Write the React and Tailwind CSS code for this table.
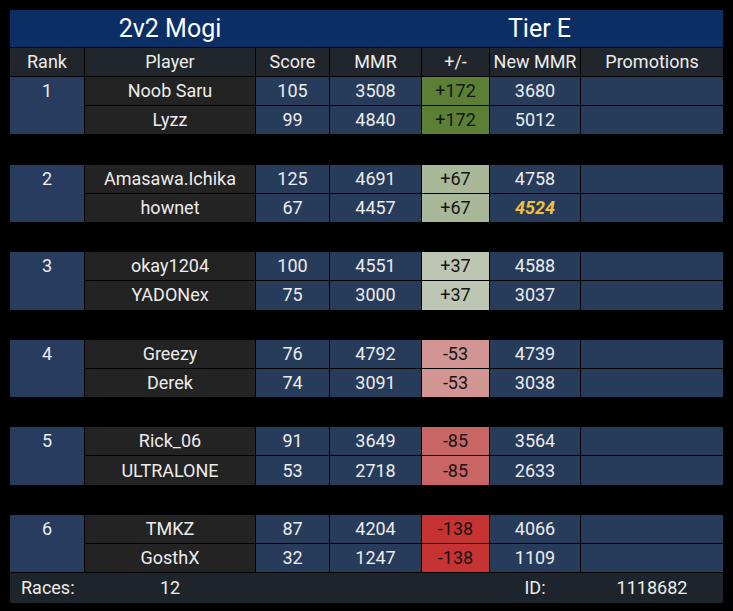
import React from "react";

const groups = [
  {
    rank: 1,
    players: [
      { name: "Noob Saru", score: 105, mmr: 3508, delta: "+172", newMmr: 3680 },
      { name: "Lyzz", score: 99, mmr: 4840, delta: "+172", newMmr: 5012 },
    ],
    deltaBg: "bg-[#5b7f35]",
  },
  {
    rank: 2,
    players: [
      { name: "Amasawa.Ichika", score: 125, mmr: 4691, delta: "+67", newMmr: 4758 },
      { name: "hownet", score: 67, mmr: 4457, delta: "+67", newMmr: 4524, highlight: true },
    ],
    deltaBg: "bg-[#a8b898]",
  },
  {
    rank: 3,
    players: [
      { name: "okay1204", score: 100, mmr: 4551, delta: "+37", newMmr: 4588 },
      { name: "YADONex", score: 75, mmr: 3000, delta: "+37", newMmr: 3037 },
    ],
    deltaBg: "bg-[#bcc6b2]",
  },
  {
    rank: 4,
    players: [
      { name: "Greezy", score: 76, mmr: 4792, delta: "-53", newMmr: 4739 },
      { name: "Derek", score: 74, mmr: 3091, delta: "-53", newMmr: 3038 },
    ],
    deltaBg: "bg-[#d39594]",
  },
  {
    rank: 5,
    players: [
      { name: "Rick_06", score: 91, mmr: 3649, delta: "-85", newMmr: 3564 },
      { name: "ULTRALONE", score: 53, mmr: 2718, delta: "-85", newMmr: 2633 },
    ],
    deltaBg: "bg-[#c96665]",
  },
  {
    rank: 6,
    players: [
      { name: "TMKZ", score: 87, mmr: 4204, delta: "-138", newMmr: 4066 },
      { name: "GosthX", score: 32, mmr: 1247, delta: "-138", newMmr: 1109 },
    ],
    deltaBg: "bg-[#c73333]",
  },
];

const cols = "grid grid-cols-[74px_170px_73px_91px_67px_90px_142px] gap-px";
const cell = "flex items-center justify-center";

const Group = ({ group }) => (
  <div className={`${cols} grid-rows-[28.2px_28.2px]`}>
    <div className="row-span-2 bg-[#273c5e] flex justify-center">
      <span className="h-[28.2px] flex items-center">{group.rank}</span>
    </div>
    {group.players.map((p, i) => (
      <React.Fragment key={i}>
        <div className={`${cell} bg-[#232323]`}>{p.name}</div>
        <div className={`${cell} bg-[#273b5b]`}>{p.score}</div>
        <div className={`${cell} bg-[#273b5b]`}>{p.mmr}</div>
        <div className={`${cell} ${group.deltaBg} text-[#151515]`}>{p.delta}</div>
        <div className={`${cell} bg-[#273b5b]`}>
          {p.highlight ? (
            <span className="font-bold italic text-[#f0c237]">{p.newMmr}</span>
          ) : (
            p.newMmr
          )}
        </div>
        <div className={`${cell} bg-[#273b5b]`}></div>
      </React.Fragment>
    ))}
  </div>
);

const App = () => {
  return (
    <div
      className="w-[733px] h-[611px] bg-black px-[10px] pt-[10px] text-[#ececec] text-[18px] leading-none"
      style={{ fontFamily: "Roboto, 'Noto Sans', sans-serif" }}
    >
      {/* title */}
      <div className="flex h-[37px] bg-[#0b2e64] text-white text-[25px]">
        <div className="w-[320px] flex items-center justify-center">2v2 Mogi</div>
        <div className="flex-1 flex items-center justify-center pl-[26px]">Tier E</div>
      </div>

      {/* header */}
      <div className={`${cols} h-[28px] mt-px`}>
        {["Rank", "Player", "Score", "MMR", "+/-", "New MMR", "Promotions"].map((h) => (
          <div key={h} className={`${cell} bg-[#21262d]`}>
            {h}
          </div>
        ))}
      </div>

      <div className="flex flex-col gap-[30.2px] mt-px">
        {groups.map((g) => (
          <Group key={g.rank} group={g} />
        ))}
      </div>

      {/* footer */}
      <div className={`${cols} h-[30px] mt-px bg-[#1e242b]`}>
        <div className="flex items-center pl-[11px]">Races:</div>
        <div className={cell}>12</div>
        <div></div>
        <div></div>
        <div></div>
        <div className={cell}>ID:</div>
        <div className={cell}>1118682</div>
      </div>
    </div>
  );
};

export default App;
